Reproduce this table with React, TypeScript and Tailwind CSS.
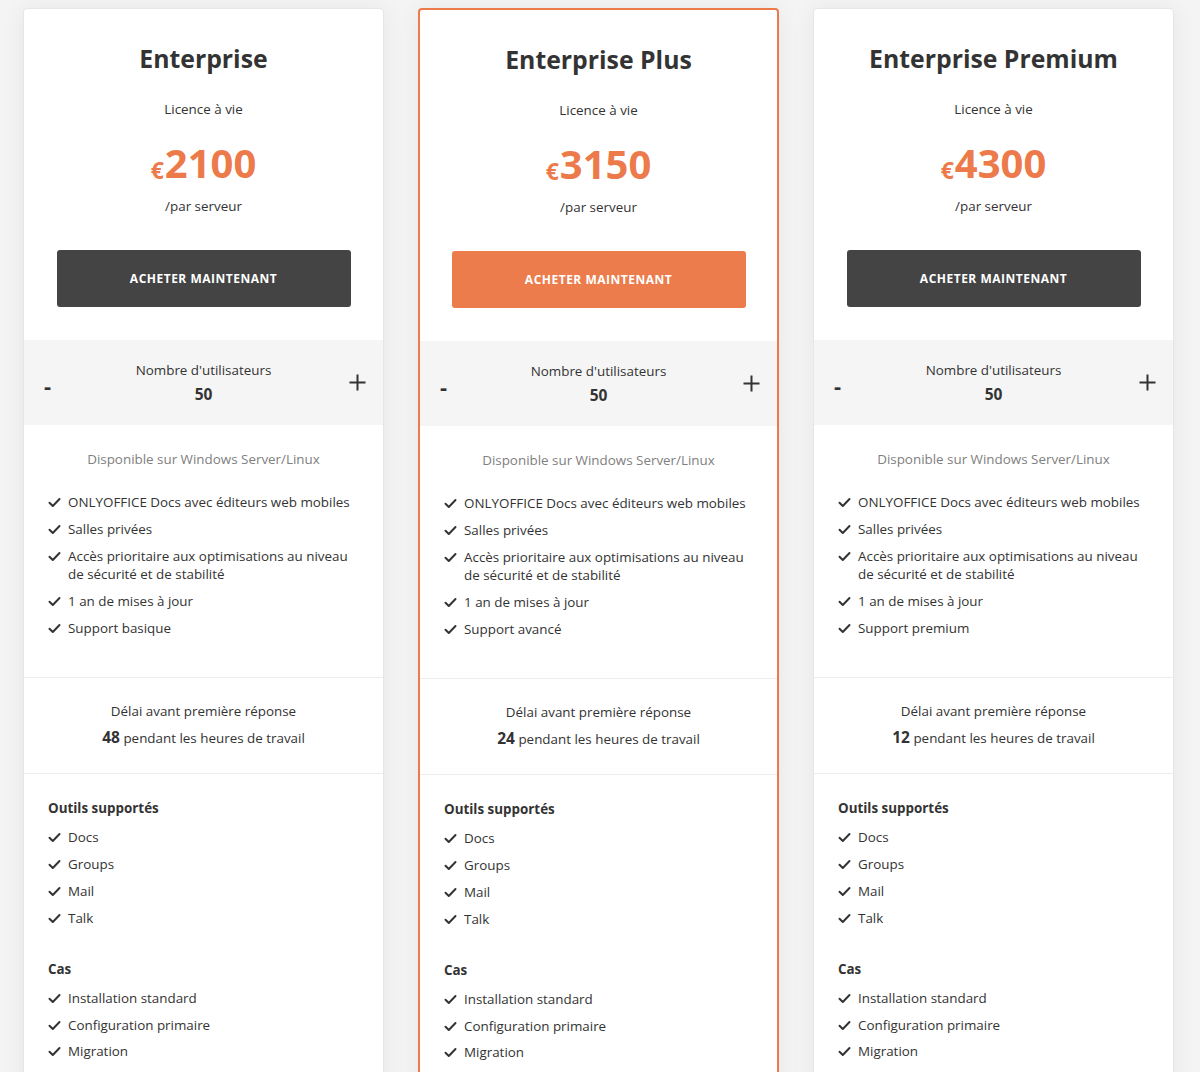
import React from "react"

type Plan = {
  name: string
  price: string
  support: string
  hours: string
  featured?: boolean
}

const plans: Plan[] = [
  { name: "Enterprise", price: "2100", support: "Support basique", hours: "48" },
  { name: "Enterprise Plus", price: "3150", support: "Support avancé", hours: "24", featured: true },
  { name: "Enterprise Premium", price: "4300", support: "Support premium", hours: "12" },
]

const tools = ["Docs", "Groups", "Mail", "Talk"]
const cases = ["Installation standard", "Configuration primaire", "Migration"]

function CheckIcon() {
  return (
    <svg width="13" height="13" viewBox="0 0 13 13" className="shrink-0 mt-[3px]">
      <path d="M1.5 6.8 L4.8 10 L11.5 3" fill="none" stroke="#333" strokeWidth="2" strokeLinecap="round" strokeLinejoin="round" />
    </svg>
  )
}

function CheckItem({ children }: { children: React.ReactNode }) {
  return (
    <li className="flex gap-[7px] text-[13.4px] leading-[18px] text-[#333]">
      <CheckIcon />
      <span>{children}</span>
    </li>
  )
}

function PlanCard({ plan }: { plan: Plan }) {
  const features = [
    "ONLYOFFICE Docs avec éditeurs web mobiles",
    "Salles privées",
    "Accès prioritaire aux optimisations au niveau de sécurité et de stabilité",
    "1 an de mises à jour",
    plan.support,
  ]

  return (
    <div
      className={`w-[361px] shrink-0 bg-white rounded-[4px] shadow-[0_0_24px_rgba(0,0,0,0.06)] ${
        plan.featured ? "border-2 border-[#ec7a4b]" : "border border-[#e6e6e6]"
      }`}
    >
      {/* Header */}
      <div className="flex flex-col items-center pt-[31px]">
        <h2 className="text-[24.8px] leading-[36px] font-bold text-[#333]">{plan.name}</h2>
        <p className="mt-[23px] text-[13.4px] leading-[20px] text-[#333]">Licence à vie</p>
        <div className="mt-[20px] flex items-end leading-[48px] text-[#ec7a4b] font-bold">
          <span className="text-[23px] leading-[34px] mr-[1px]">€</span>
          <span className="text-[40px]">{plan.price}</span>
        </div>
        <p className="mt-[9px] text-[13.4px] leading-[20px] text-[#333]">/par serveur</p>
        <button
          className={`mt-[34px] w-[294px] h-[57px] rounded-[3px] text-white text-[12px] font-bold tracking-[0.5px] ${
            plan.featured ? "bg-[#ec7c4c]" : "bg-[#444444]"
          }`}
        >
          ACHETER MAINTENANT
        </button>
      </div>

      {/* Users */}
      <div className="mt-[33px] h-[85px] bg-[#f5f5f5] flex items-center pl-[20px] pr-[17px]">
        <span className="w-[22px] text-[22px] font-bold text-[#333] leading-none mt-[4px]">-</span>
        <div className="flex-1 flex flex-col items-center">
          <span className="text-[13.4px] leading-[20px] text-[#333]">Nombre d'utilisateurs</span>
          <span className="mt-[3px] text-[15.5px] leading-[22px] font-bold text-[#333]">50</span>
        </div>
        <div className="w-[25px] flex justify-end">
          <svg width="17" height="17" viewBox="0 0 17 17">
            <path d="M8.5 0.5 V16.5 M0.5 8.5 H16.5" stroke="#333" strokeWidth="2" />
          </svg>
        </div>
      </div>

      {/* Features */}
      <div className="pt-[24px] pb-[40px] px-[24px]">
        <p className="text-center text-[13.4px] leading-[20px] text-[#808080]">Disponible sur Windows Server/Linux</p>
        <ul className="mt-[24px] flex flex-col gap-[9px]">
          {features.map((f) => (
            <CheckItem key={f}>{f}</CheckItem>
          ))}
        </ul>
      </div>

      {/* Response time */}
      <div className="border-t border-[#ececec] h-[96px] flex flex-col items-center pt-[23px]">
        <p className="text-[13.4px] leading-[20px] text-[#333]">Délai avant première réponse</p>
        <p className="mt-[5px] text-[13.4px] leading-[22px] text-[#333]">
          <span className="text-[15.5px] font-bold">{plan.hours}</span> pendant les heures de travail
        </p>
      </div>

      {/* Tools & cases */}
      <div className="border-t border-[#ececec] px-[24px] pt-[24px] pb-[40px]">
        <h3 className="text-[13.4px] leading-[20px] font-bold text-[#333]">Outils supportés</h3>
        <ul className="mt-[10px] flex flex-col gap-[9px]">
          {tools.map((t) => (
            <CheckItem key={t}>{t}</CheckItem>
          ))}
        </ul>
        <h3 className="mt-[32px] text-[13.4px] leading-[20px] font-bold text-[#333]">Cas</h3>
        <ul className="mt-[10px] flex flex-col gap-[8.5px]">
          {cases.map((c) => (
            <CheckItem key={c}>{c}</CheckItem>
          ))}
        </ul>
      </div>
    </div>
  )
}

export default function App() {
  return (
    <div className="h-[1072px] overflow-hidden bg-[#f4f4f4] font-['Open_Sans',sans-serif]">
      <div className="flex gap-[34px] pl-[23px] pt-[8px]">
        {plans.map((p) => (
          <PlanCard key={p.name} plan={p} />
        ))}
      </div>
    </div>
  )
}
